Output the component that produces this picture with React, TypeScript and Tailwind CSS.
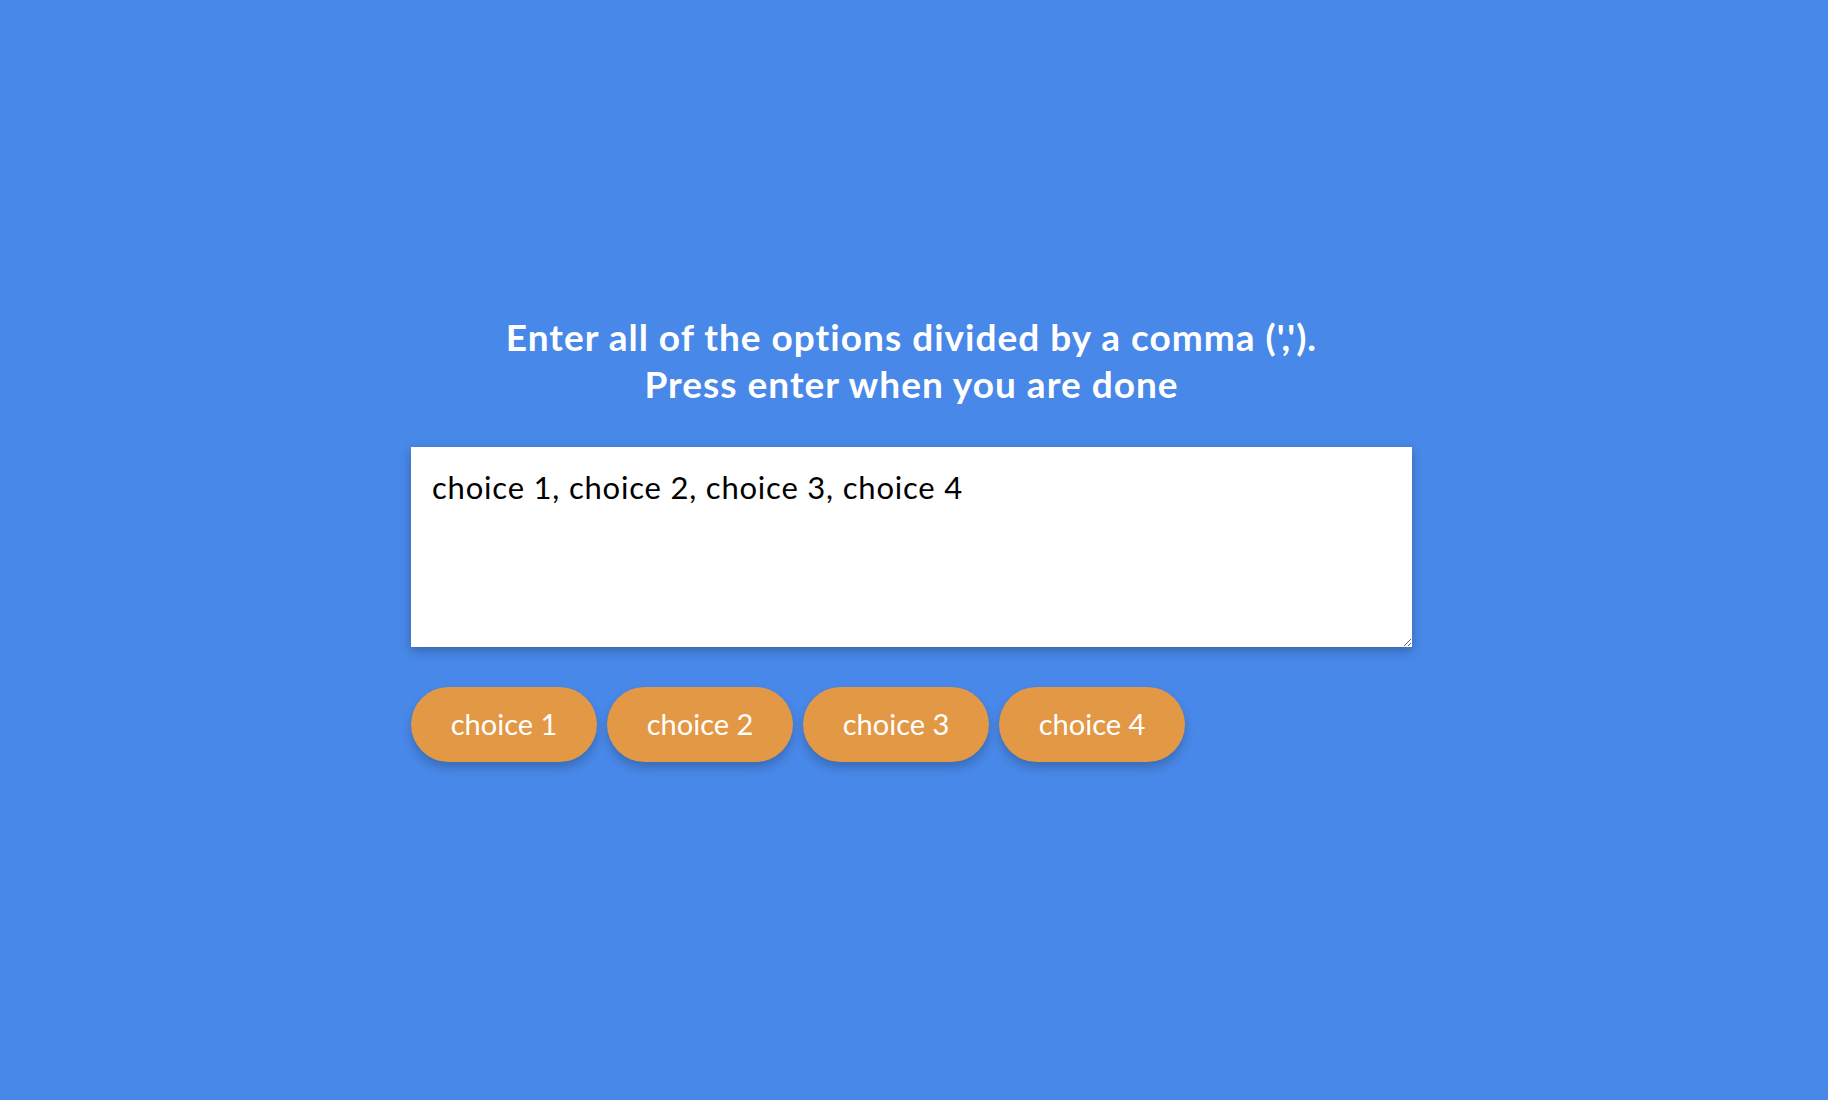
import React from 'react';

const choices = ['choice 1', 'choice 2', 'choice 3', 'choice 4'];

const App: React.FC = () => {
  const [value, setValue] = React.useState('choice 1, choice 2, choice 3, choice 4');

  return (
    <div className="min-h-screen w-full bg-[#4888e8] flex flex-col items-center justify-center pr-[5px] pb-[26px] font-['Lato',sans-serif]">
      <div className="w-[1001px] flex flex-col items-center">
        <h1 className="text-[37px] leading-[47px] tracking-[1px] font-bold text-white text-center">
          Enter all of the options divided by a comma (',').
          <br />
          Press enter when you are done
        </h1>
        <textarea
          value={value}
          onChange={(e) => setValue(e.target.value)}
          className="mt-[40px] w-full h-[200px] bg-white text-black px-[21px] pt-[20px] pb-[16px] text-[31px] leading-[40px] tracking-[0.8px] shadow-[0_4px_10px_rgba(0,0,0,0.25)] outline-none font-['Lato',sans-serif]"
        />
        <div className="w-full flex gap-[10px] mt-[40px]">
          {choices.map((c) => (
            <button
              key={c}
              className="w-[186px] h-[75px] rounded-full bg-[#e39845] text-white text-[29px] shadow-[0_6px_10px_rgba(0,0,0,0.2)]"
            >
              {c}
            </button>
          ))}
        </div>
      </div>
    </div>
  );
};

export default App;
